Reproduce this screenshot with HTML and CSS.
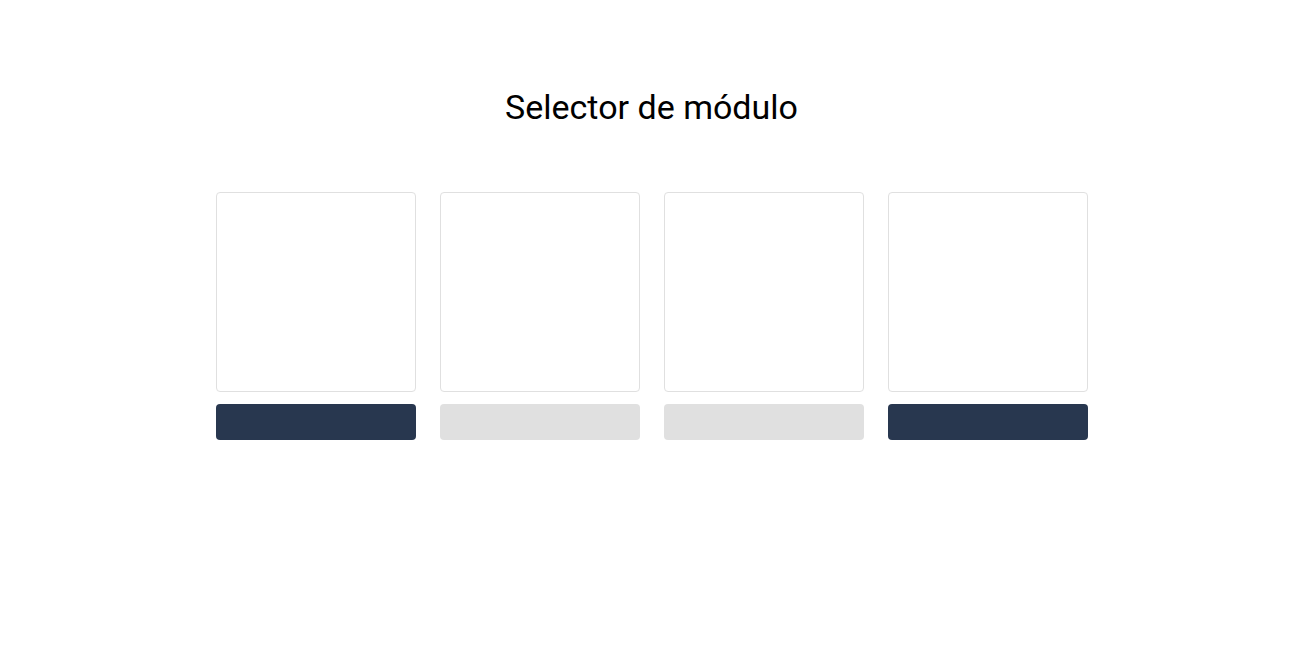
FILE: index.html
```html
<!DOCTYPE html>
<html lang="es">
<head>
<meta charset="utf-8">
<title>Selector de módulo</title>
<link rel="stylesheet" href="styles.css">
</head>
<body>
<main class="page">
  <h1 class="title">Selector de módulo</h1>
  <div class="modules">
    <div class="module">
      <div class="card"></div>
      <button class="btn btn-dark" type="button"></button>
    </div>
    <div class="module">
      <div class="card"></div>
      <button class="btn btn-light" type="button"></button>
    </div>
    <div class="module">
      <div class="card"></div>
      <button class="btn btn-light" type="button"></button>
    </div>
    <div class="module">
      <div class="card"></div>
      <button class="btn btn-dark" type="button"></button>
    </div>
  </div>
</main>
</body>
</html>
```
FILE: styles.css
```css
html, body {
  margin: 0;
  padding: 0;
  background: #ffffff;
}
body {
  font-family: Roboto, "Liberation Sans", Arial, sans-serif;
  color: #000000;
}
.page {
  display: flex;
  flex-direction: column;
  align-items: center;
  padding-top: 83px;
}
.title {
  margin: 0 0 61px 0;
  font-size: 34px;
  line-height: 48px;
  font-weight: 400;
}
.modules {
  display: flex;
  gap: 24px;
}
.module {
  display: flex;
  flex-direction: column;
  gap: 12px;
  width: 200px;
}
.card {
  box-sizing: border-box;
  width: 200px;
  height: 200px;
  border: 1px solid #e0e0e0;
  border-radius: 4px;
  background: #ffffff;
}
.btn {
  display: block;
  width: 200px;
  height: 36px;
  border: none;
  border-radius: 4px;
  padding: 0;
  margin: 0;
}
.btn-dark {
  background: #28374f;
}
.btn-light {
  background: #e0e0e0;
}
```
